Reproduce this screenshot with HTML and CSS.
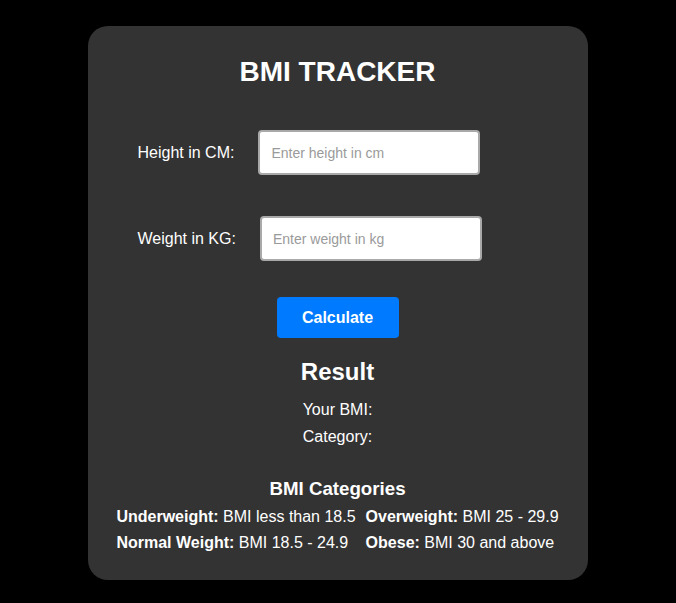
FILE: index.html
```html
<!DOCTYPE html>
<html>
<head>
<meta charset="utf-8">
<title>BMI Tracker</title>
<link rel="stylesheet" href="styles.css">
</head>
<body>
<div class="card">
  <h1 class="title">BMI TRACKER</h1>
  <div class="field field-first">
    <label class="field-label" for="height">Height in CM:</label>
    <input class="field-input" id="height" type="number" placeholder="Enter height in cm">
  </div>
  <div class="field field-second">
    <label class="field-label" for="weight">Weight in KG:</label>
    <input class="field-input" id="weight" type="number" placeholder="Enter weight in kg">
  </div>
  <button class="calc-btn">Calculate</button>
  <h2 class="result-title">Result</h2>
  <p class="result-line result-bmi">Your BMI:</p>
  <p class="result-line result-cat">Category:</p>
  <h3 class="cat-title">BMI Categories</h3>
  <div class="cat-grid">
    <div class="cat-item"><b>Underweight:</b> BMI less than 18.5</div>
    <div class="cat-item"><b>Overweight:</b> BMI 25 - 29.9</div>
    <div class="cat-item"><b>Normal Weight:</b> BMI 18.5 - 24.9</div>
    <div class="cat-item"><b>Obese:</b> BMI 30 and above</div>
  </div>
</div>
</body>
</html>
```

FILE: styles.css
```css
* { box-sizing: border-box; }
html, body { background: #000; }
body {
  margin: 0;
  padding-top: 26px;
  font-family: "Liberation Sans", Arial, sans-serif;
  color: #fff;
  display: flex;
  justify-content: center;
}
.card {
  width: 500px;
  margin-left: -1px;
  background: #333333;
  border-radius: 20px;
  padding: 30px 50px 28px;
  display: flex;
  flex-direction: column;
}
.title {
  margin: 0;
  font-size: 28px;
  line-height: 32px;
  font-weight: bold;
  text-align: center;
}
.field {
  display: flex;
  align-items: center;
  gap: 24px;
}
.field-first { margin-top: 42px; }
.field-second { margin-top: 41px; }
.field-label {
  font-size: 16px;
  line-height: 18px;
}
.field-input {
  width: 222px;
  height: 45px;
  border: 2px solid #a9a9a9;
  border-radius: 4px;
  padding: 0 11px;
  font-family: "Liberation Sans", Arial, sans-serif;
  font-size: 14px;
  background: #fff;
  color: #000;
  outline: none;
}
.field-input::placeholder { color: #9a9a9a; }
.field-input::-webkit-outer-spin-button,
.field-input::-webkit-inner-spin-button { -webkit-appearance: none; margin: 0; }
.calc-btn {
  align-self: center;
  margin-top: 36px;
  width: 122px;
  height: 41px;
  border: none;
  border-radius: 4px;
  background: #007bff;
  color: #fff;
  font-family: "Liberation Sans", Arial, sans-serif;
  font-size: 16px;
  font-weight: bold;
  padding: 0;
}
.result-title {
  margin: 20px 0 0;
  font-size: 24px;
  line-height: 28px;
  text-align: center;
}
.result-line {
  margin: 0;
  font-size: 16px;
  line-height: 18px;
  text-align: center;
}
.result-bmi { margin-top: 15px; }
.result-cat { margin-top: 9px; }
.cat-title {
  margin: 32px 0 0;
  font-size: 18.72px;
  line-height: 22px;
  text-align: center;
}
.cat-grid {
  margin: 8px -50px 0;
  display: grid;
  grid-template-columns: auto auto;
  justify-content: center;
  column-gap: 10px;
  row-gap: 8px;
  font-size: 16px;
  line-height: 18px;
}
```
